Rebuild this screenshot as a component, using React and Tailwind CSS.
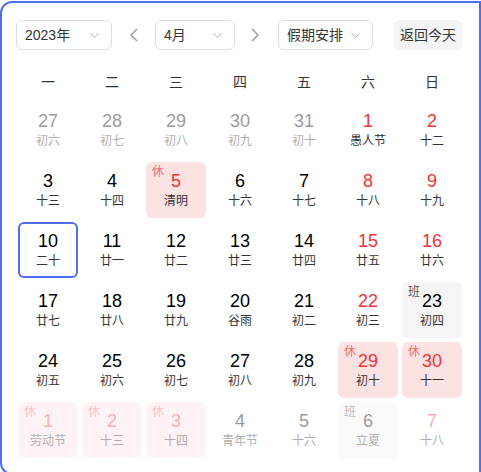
import React from 'react'
import { ChevronDown } from 'lucide-react'

const days = [
  [27, '初六', 'prev'], [28, '初七', 'prev'], [29, '初八', 'prev'], [30, '初九', 'prev'], [31, '初十', 'prev'], [1, '愚人节', 'we'], [2, '十二', 'we'],
  [3, '十三'], [4, '十四'], [5, '清明', 'rest'], [6, '十六'], [7, '十七'], [8, '十八', 'we'], [9, '十九', 'we'],
  [10, '二十', 'today'], [11, '廿一'], [12, '廿二'], [13, '廿三'], [14, '廿四'], [15, '廿五', 'we'], [16, '廿六', 'we'],
  [17, '廿七'], [18, '廿八'], [19, '廿九'], [20, '谷雨'], [21, '初二'], [22, '初三', 'we'], [23, '初四', 'work'],
  [24, '初五'], [25, '初六'], [26, '初七'], [27, '初八'], [28, '初九'], [29, '初十', 'rest'], [30, '十一', 'rest'],
  [1, '劳动节', 'rest', true], [2, '十三', 'rest', true], [3, '十四', 'rest', true], [4, '青年节', null, true], [5, '十六', null, true], [6, '立夏', 'work', true], [7, '十八', 'we', true],
]

const Select = ({ label, w }) => (
  <div className={`${w} h-[30px] flex items-center justify-between pl-[8px] pr-[9px] border border-[#dcdfe6] rounded-[6px] bg-white text-[14px] text-[#333]`}>
    <span>{label}</span>
    <ChevronDown size={15} strokeWidth={1.5} className="text-[#a8abb2]" />
  </div>
)

const Arrow = ({ dir }) => (
  <svg width="8" height="14" viewBox="0 0 8 14">
    <path d={dir === 'left' ? 'M7 1 1 7l6 6' : 'M1 1l6 6-6 6'} stroke="#999" strokeWidth="1.4" fill="none" />
  </svg>
)

const Cell = ({ num, lunar, kind, next }) => {
  const prev = kind === 'prev'
  const rest = kind === 'rest'
  const work = kind === 'work'
  const red = rest || kind === 'we'
  let box = 'relative h-[56px] rounded-[6px] flex flex-col items-center justify-center'
  if (rest) box += ' bg-[#fde2e4]'
  if (work) box += ' bg-[#f5f5f5]'
  if (kind === 'today') box += ' border-2 border-[#4e6ef2]'
  if (prev || next) box += ' opacity-40'
  return (
    <div className="px-[2px]">
      <div className={box}>
        {rest && <span className="absolute left-[6px] top-[3px] text-[12px] leading-[14px] text-[#f56c6c]">休</span>}
        {work && <span className="absolute left-[6px] top-[3px] text-[12px] leading-[14px] text-[#555]">班</span>}
        <span className={`text-[18px] leading-[22px] ${red ? 'text-[#f73131]' : 'text-black'}`}>{num}</span>
        <span className="text-[12px] leading-[18px] text-[#333]">{lunar}</span>
      </div>
    </div>
  )
}

export default function App() {
  return (
    <div className="h-[472px] overflow-hidden pt-[1px] font-['Liberation_Sans','Noto_Sans_CJK_SC',sans-serif]">
      <div className="h-[474px] border-2 border-[#4e6ef2] rounded-l-[12px] bg-white pt-[17px] pl-[14px]">
        <div className="flex items-center">
          <Select label="2023年" w="w-[96px]" />
          <div className="w-[43px] flex justify-center"><Arrow dir="left" /></div>
          <Select label="4月" w="w-[80px]" />
          <div className="w-[43px] flex justify-center pr-[4px]"><Arrow dir="right" /></div>
          <Select label="假期安排" w="w-[95px]" />
          <button className="ml-[21px] w-[68px] h-[30px] rounded-[6px] bg-[#f4f4f5] text-[14px] text-[#333]">返回今天</button>
        </div>
        <div className="mt-[12px] grid grid-cols-[repeat(7,64px)] h-[40px] text-[14px] text-[#333]">
          {['一', '二', '三', '四', '五', '六', '日'].map((d) => (
            <div key={d} className="flex items-center justify-center">{d}</div>
          ))}
        </div>
        <div className="grid grid-cols-[repeat(7,64px)] gap-y-[4px]">
          {days.map(([num, lunar, kind, next], i) => (
            <Cell key={i} num={num} lunar={lunar} kind={kind} next={next} />
          ))}
        </div>
      </div>
    </div>
  )
}
